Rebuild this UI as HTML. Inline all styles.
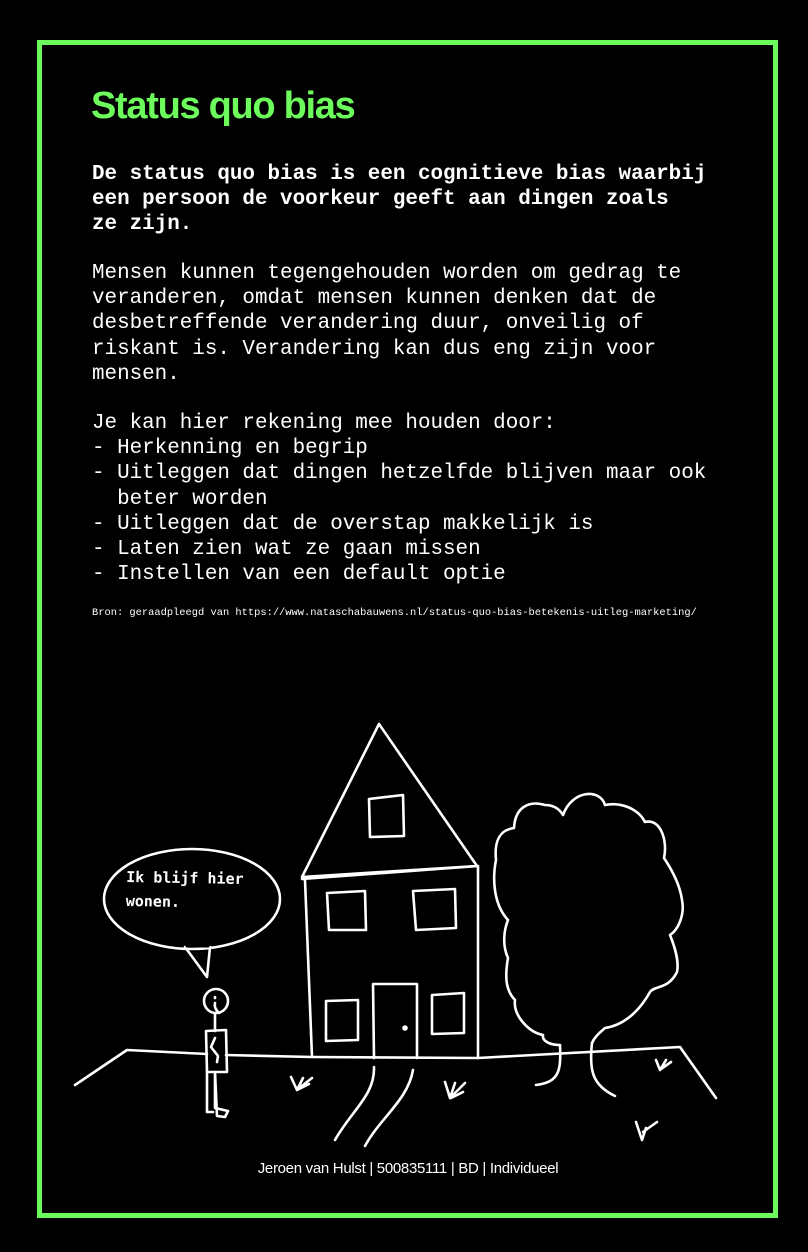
<!DOCTYPE html>
<html><head><meta charset="utf-8"><style>
html,body{margin:0;padding:0;background:#000;}
body{width:808px;height:1252px;position:relative;overflow:hidden;}
.frame{position:absolute;left:37px;top:40px;width:731px;height:1168px;border:5px solid #6cfd5c;}
.t{position:absolute;left:91px;top:85px;font:bold 38px "Liberation Sans",sans-serif;color:#6cfd5c;letter-spacing:-1.3px;margin:0;}
.m{position:absolute;left:92px;font-family:"Liberation Mono",monospace;font-size:20.9px;line-height:25.2px;color:#fff;white-space:pre;margin:0;}
.b{font-weight:bold;top:162px;}
.p{top:261px;}
.q{top:411px;}
.src{position:absolute;left:92px;top:607px;font:10.4px "Liberation Mono",monospace;color:#fff;white-space:pre;}
.foot{position:absolute;left:0;width:816px;top:1160px;text-align:center;font:15px "Liberation Sans",sans-serif;color:#fff;letter-spacing:-0.3px;}
svg{position:absolute;left:0;top:0;}
</style></head><body>
<div class="frame"></div>
<h1 class="t">Status quo bias</h1>
<div class="m b">De status quo bias is een cognitieve bias waarbij
een persoon de voorkeur geeft aan dingen zoals
ze zijn.</div>
<div class="m p">Mensen kunnen tegengehouden worden om gedrag te
veranderen, omdat mensen kunnen denken dat de
desbetreffende verandering duur, onveilig of
riskant is. Verandering kan dus eng zijn voor
mensen.</div>
<div class="m q">Je kan hier rekening mee houden door:
- Herkenning en begrip
- Uitleggen dat dingen hetzelfde blijven maar ook
  beter worden
- Uitleggen dat de overstap makkelijk is
- Laten zien wat ze gaan missen
- Instellen van een default optie</div>
<div class="src">Bron: geraadpleegd van https://www.nataschabauwens.nl/status-quo-bias-betekenis-uitleg-marketing/</div>
<svg width="808" height="1252" fill="none" stroke="#fff" stroke-width="2.6" stroke-linecap="round" stroke-linejoin="round">
<path d="M75 1085 L127 1050 L207 1054 M226 1055 L312 1057 L478 1058 L680 1047 L716 1098"/>
<path d="M302 877 L379 724 L477 866 Z"/>
<path d="M302 879 L478 866 L478 1058 M305 880 L312 1057"/>
<path d="M369 799 L403 795 L404 836 L370 837 Z"/>
<path d="M327 893 L365 891 L366 930 L329 930 Z"/>
<path d="M413 891 L455 889 L456 928 L416 930 Z"/>
<path d="M326 1001 L358 1000 L358 1040 L326 1041 Z"/>
<path d="M432 995 L464 993 L464 1033 L432 1034 Z"/>
<path d="M374 1058 L373 984 L417 984 L417 1058"/>
<circle cx="405" cy="1028" r="1.5" fill="#fff"/>
<path d="M374 1067 C375 1095 352 1110 335 1140 M413 1070 C408 1100 380 1118 365 1146"/>
<path d="M560 1045 C561 1070 560 1082 536 1085 M592 1043 C589 1070 592 1085 615 1096"/>
<path d="M560 1045 C548 1045 542 1040 543 1035 C528 1032 513 1015 515 1000 C505 990 505 975 508 958 C502 945 504 930 508 920 C494 905 492 880 496 860 C494 840 500 830 514 828 C515 808 528 800 545 805 C555 805 560 810 563 815 C572 790 600 788 605 805 C620 802 638 808 645 822 C660 818 668 840 664 858 C672 870 680 885 682 900 C685 915 678 930 670 935 C676 950 679 962 677 972 C668 990 655 985 650 992 C640 1010 625 1025 605 1028 C598 1034 594 1038 592 1043"/>
<ellipse cx="192" cy="899" rx="88" ry="50"/>
<path d="M185 947 L207 977 L210 947" stroke="#fff"/>
<path d="M187 946 L208 946" stroke="#000" stroke-width="3"/>
<circle cx="216" cy="1001" r="12"/>
<path d="M215 997 L215 998 M215 1003 C214 1008 217 1011 219 1013"/>
<path d="M215 1013 L215 1031 M206 1031 L226 1030 L227 1072 L207 1072 Z"/>
<path d="M215 1038 L211 1047 L218 1056 L217 1062"/>
<path d="M207 1072 L207 1112 L213 1112 M215 1072 L215 1108 L228 1111 L225 1117 L217 1116 Z"/>
<path d="M291 1077 L297 1090 L303 1078 M298 1089 L312 1078 M297 1090 L309 1084"/>
<path d="M445 1082 L450 1098 L455 1083 M451 1097 L465 1083 M451 1098 L463 1092"/>
<path d="M656 1060 L660 1070 L666 1060 M661 1069 L671 1062"/>
<path d="M636 1122 L642 1140 L646 1128 M643 1132 L657 1122"/>
</svg>
<div style="position:absolute;left:126px;top:866px;font:bold 15px 'DejaVu Sans Mono','Liberation Mono',monospace;color:#fff;line-height:24px;transform:rotate(1deg);">Ik blijf hier<br>wonen.</div>
<div class="foot">Jeroen van Hulst | 500835111 | BD | Individueel</div>
</body></html>
